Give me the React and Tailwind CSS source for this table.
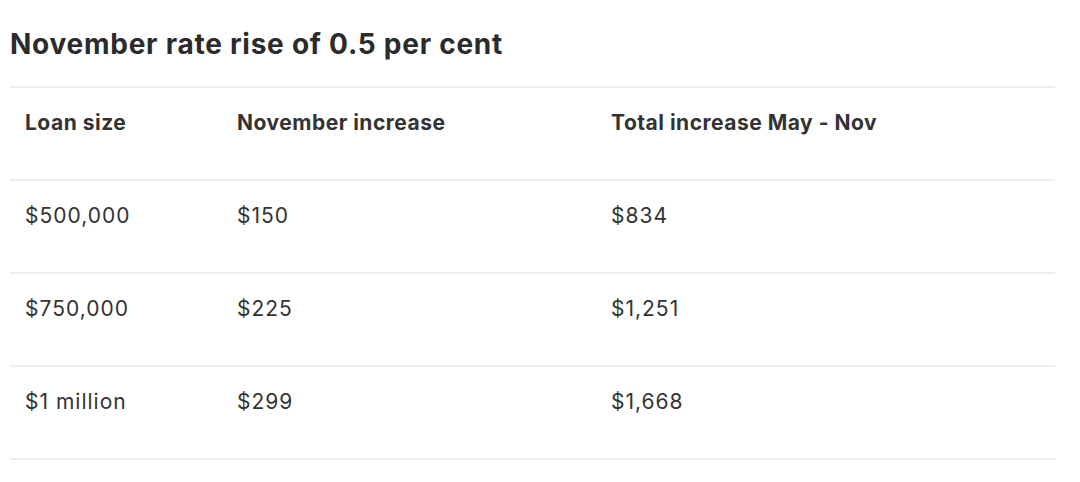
const rows = [
  ["$500,000", "$150", "$834"],
  ["$750,000", "$225", "$1,251"],
  ["$1 million", "$299", "$1,668"],
];

function Row({ cells, head }) {
  return (
    <div className="grid grid-cols-[212px_374px_1fr] border-t-2 border-[#eeeeee] h-[93px]">
      {cells.map((c, i) => (
        <div
          key={i}
          className={`pl-[15px] pt-[21px] text-[21px] leading-[28px] text-[#333333] ${head ? "font-bold tracking-[0.5px]" : "font-normal tracking-[1px]"}`}
        >
          {c}
        </div>
      ))}
    </div>
  );
}

export default function App() {
  return (
    <div className="w-[1080px] h-[482px] bg-white overflow-hidden font-['Inter',_'Noto_Sans',_sans-serif]">
      <div className="pl-[10px] pr-[25px]">
        <h2 className="pt-[26px] h-[86px] text-[28px] leading-[36px] font-bold tracking-[0.75px] text-[#2b2b2b]">
          November rate rise of 0.5 per cent
        </h2>
        <Row head cells={["Loan size", "November increase", "Total increase May - Nov"]} />
        {rows.map((r, i) => (
          <Row key={i} cells={r} />
        ))}
        <div className="border-t-2 border-[#eeeeee]" />
      </div>
    </div>
  );
}
